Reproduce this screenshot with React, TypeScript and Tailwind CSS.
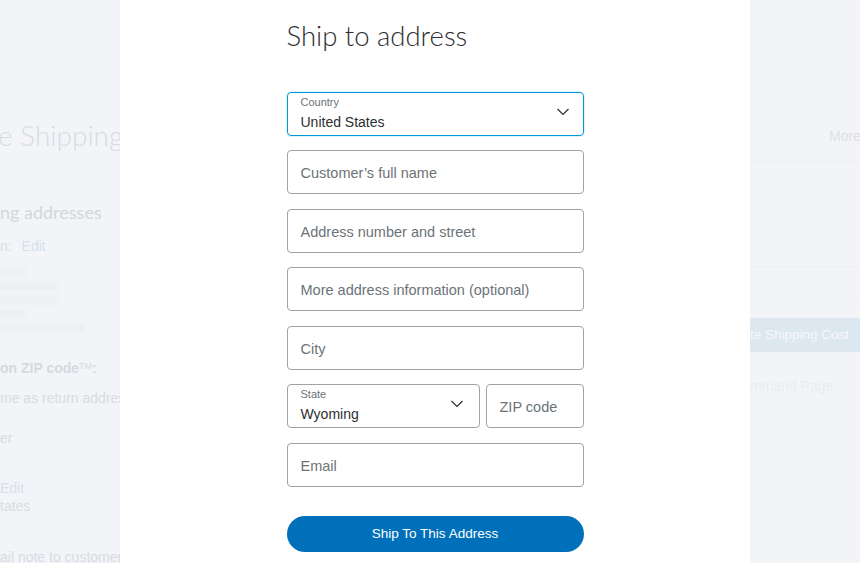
// Ship-to-address modal over a faded shipping page.
import React from "react";

const FIELDS_TOP = [
  { placeholder: "Customer’s full name", mt: "mt-[14px]" },
  { placeholder: "Address number and street", mt: "mt-[15px]" },
  { placeholder: "More address information (optional)", mt: "mt-[14px]" },
  { placeholder: "City", mt: "mt-[15px]" },
];

function Chevron() {
  return (
    <svg width="14" height="8" viewBox="0 0 14 8" fill="none" className="mb-[2px]">
      <polyline points="1.5,1 7,6.5 12.5,1" stroke="#2c2e2f" strokeWidth="1.2" />
    </svg>
  );
}

function TextField({ placeholder, className = "" }: { placeholder: string; className?: string }) {
  return (
    <div
      className={`flex h-[44px] items-center rounded-[4px] border border-[#9da3a6] bg-white px-[13px] pt-[4px] text-[14.5px] text-[#6c7378] ${className}`}
    >
      {placeholder}
    </div>
  );
}

function SelectField({ label, value, className = "" }: { label: string; value: string; className?: string }) {
  return (
    <div
      className={`flex h-[44px] items-center justify-between rounded-[4px] border px-[13px] pb-[2px] ${className}`}
    >
      <div className="flex flex-col">
        <span className="text-[11px] leading-[13px] text-[#6c7378]">{label}</span>
        <span className="mt-[5px] text-[14px] leading-[17px] text-[#2c2e2f]">{value}</span>
      </div>
      <Chevron />
    </div>
  );
}

function BackgroundPage() {
  return (
    <div className="flex h-full w-full justify-between">
      <div className="flex w-[120px] flex-col overflow-hidden whitespace-nowrap">
        <div className="mt-[117px] -ml-[2px] font-['Lato'] text-[28px] font-light leading-[36px] text-[#d8dbe1]">
          e Shipping
        </div>
        <div className="mt-[17px] h-px w-full bg-[#ebedf1]" />
        <div className="mt-[11px] h-px w-full bg-[#eceef2]" />
        <div className="mt-[20px] font-['Lato'] text-[18px] leading-[22px] text-[#d3d6dc]">ng addresses</div>
        <div className="mt-[14px] text-[14px] leading-[18px] text-[#dadde3]">
          n: <span className="ml-[6px] text-[#d3e1ec]">Edit</span>
        </div>
        <div className="mt-[12px] flex flex-col gap-[4px] blur-[1.5px]">
          <div className="h-[10px] w-[26px] bg-[#eeeff3]" />
          <div className="h-[10px] w-[58px] bg-[#eeeff3]" />
          <div className="h-[10px] w-[58px] bg-[#eeeff3]" />
          <div className="h-[10px] w-[26px] bg-[#eeeff3]" />
          <div className="h-[10px] w-[84px] bg-[#eeeff3]" />
        </div>
        <div className="mt-[26px] font-['Liberation_Sans'] text-[14px] font-bold leading-[18px] text-[#d6d9df]">
          on ZIP code<sup className="text-[9px] font-normal">TM</sup>:
        </div>
        <div className="mt-[12px] font-['Liberation_Sans'] text-[14px] leading-[18px] text-[#d8dbe1]">
          me as return address
        </div>
        <div className="mt-[22px] font-['Liberation_Sans'] text-[14px] leading-[18px] text-[#d8dbe1]">er</div>
        <div className="mt-[32px] font-['Liberation_Sans'] text-[14px] leading-[18px] text-[#d6e1ea]">Edit</div>
        <div className="font-['Liberation_Sans'] text-[14px] leading-[18px] text-[#d8dbe1]">tates</div>
        <div className="mt-[33px] font-['Liberation_Sans'] text-[14px] leading-[18px] text-[#d8dbe1]">
          ail note to customer
        </div>
      </div>

      <div className="flex w-[110px] flex-col overflow-hidden whitespace-nowrap">
        <div className="mt-[126px] pl-[79px] font-['Liberation_Sans'] text-[14px] leading-[20px] text-[#dde0e5]">
          More
        </div>
        <div className="mt-[15px] h-px w-full bg-[#eceef2]" />
        <div className="mt-[104px] h-px w-full bg-[#eef0f3]" />
        <div className="mt-[32px] h-px w-full bg-[#eef0f3]" />
        <div className="mt-[18px] flex h-[34px] items-center bg-[#dde7f0] font-['Liberation_Sans'] text-[13.5px] text-[#f6f8fb]">
          te Shipping Cost
        </div>
        <div className="mt-[25px] font-['Liberation_Sans'] text-[14px] leading-[18px] text-[#e9ebef] blur-[0.6px]">
          mmand Page
        </div>
      </div>
    </div>
  );
}

export default function App() {
  return (
    <div className="relative h-[563px] w-full overflow-hidden bg-[#f3f4f8] font-['Liberation_Sans',Arial,sans-serif]">
      <BackgroundPage />

      <div className="absolute left-[120px] top-0 h-full w-[630px] bg-white">
        <div className="mx-auto flex w-[297px] flex-col">
          <h1 className="mt-[18px] font-['Lato',sans-serif] text-[27.5px] font-light leading-[36px] text-[#2c2e2f]">
            Ship to address
          </h1>

          <SelectField
            label="Country"
            value="United States"
            className="mt-[38px] border-[#0099de] shadow-[0_0_0_1px_rgba(0,156,222,0.12)]"
          />

          {FIELDS_TOP.map((f) => (
            <TextField key={f.placeholder} placeholder={f.placeholder} className={f.mt} />
          ))}

          <div className="mt-[14px] flex gap-[6px]">
            <SelectField label="State" value="Wyoming" className="w-[193px] border-[#9da3a6] pr-[15px]" />
            <TextField placeholder="ZIP code" className="flex-1" />
          </div>

          <TextField placeholder="Email" className="mt-[15px]" />

          <button className="mt-[29px] flex h-[36px] items-center justify-center rounded-full bg-[#0070ba] pt-[1px] text-[13.5px] text-white">
            Ship To This Address
          </button>
        </div>
      </div>
    </div>
  );
}
